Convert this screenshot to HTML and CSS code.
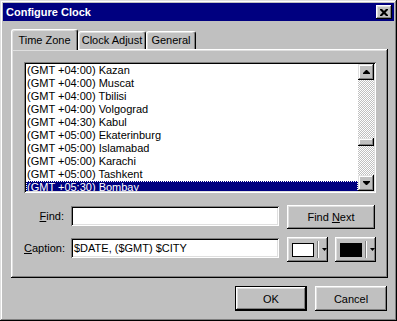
FILE: index.html
```html
<!DOCTYPE html>
<html>

<head>
    <meta charset="UTF-8">
    <title>Configure Clock</title>
    <link rel="stylesheet" href="styles.css">
</head>

<body>
    <div class="window">
        <div class="titlebar">
            <span class="title">Configure Clock</span>
            <div class="close">
                <svg width="8" height="7" viewBox="0 0 8 7">
                    <path d="M0 0h2l2 2 2-2h2v1L5.5 3.5 8 6v1H6L4 5 2 7H0V6l2.5-2.5L0 1z" fill="#000"/>
                </svg>
            </div>
        </div>
        <div class="content">
            <div class="tabs">
                <div class="tab active">Time Zone</div>
                <div class="tab tab-adjust">Clock Adjust</div>
                <div class="tab tab-general">General</div>
            </div>
            <div class="panel">
                <div class="listbox">
                    <ul class="items">
                        <li>(GMT +04:00) Kazan</li>
                        <li>(GMT +04:00) Muscat</li>
                        <li>(GMT +04:00) Tbilisi</li>
                        <li>(GMT +04:00) Volgograd</li>
                        <li>(GMT +04:30) Kabul</li>
                        <li>(GMT +05:00) Ekaterinburg</li>
                        <li>(GMT +05:00) Islamabad</li>
                        <li>(GMT +05:00) Karachi</li>
                        <li>(GMT +05:00) Tashkent</li>
                        <li class="selected">(GMT +05:30) Bombay</li>
                    </ul>
                    <div class="scrollbar">
                        <div class="scroll-btn">
                            <svg width="7" height="4" viewBox="0 0 7 4"><path d="M3 0h1l3 3v1H0V3z" fill="#000"/></svg>
                        </div>
                        <div class="track">
                            <div class="thumb"></div>
                        </div>
                        <div class="scroll-btn">
                            <svg width="7" height="4" viewBox="0 0 7 4"><path d="M0 0h7v1L4 4H3L0 1z" fill="#000"/></svg>
                        </div>
                    </div>
                </div>

                <div class="row find-row">
                    <span class="label"><u>F</u>ind:</span>
                    <div class="field"></div>
                    <div class="btn find-next"><span>Find <u>N</u>ext</span></div>
                </div>

                <div class="row caption-row">
                    <span class="label"><u>C</u>aption:</span>
                    <div class="field">$DATE, ($GMT) $CITY</div>
                    <div class="color-btn">
                        <span class="swatch"></span>
                        <span class="sep"></span>
                        <svg width="5" height="3" viewBox="0 0 5 3"><path d="M0 0h5L2.5 3z" fill="#000"/></svg>
                    </div>
                    <div class="color-btn color-btn-2">
                        <span class="swatch black"></span>
                        <span class="sep"></span>
                        <svg width="5" height="3" viewBox="0 0 5 3"><path d="M0 0h5L2.5 3z" fill="#000"/></svg>
                    </div>
                </div>
            </div>

            <div class="buttons">
                <div class="btn default">OK</div>
                <div class="btn">Cancel</div>
            </div>
        </div>
    </div>
</body>

</html>
```

FILE: styles.css
```css
* {
    font-family: "Liberation Sans", Arial, sans-serif;
    font-size: 11px;
    box-sizing: border-box;
}

body {
    margin: 0;
    background-color: #c0c0c0;
}

.window {
    width: 397px;
    height: 321px;
    padding: 3px;
    background-color: #c0c0c0;
    box-shadow: inset -1px -1px #000, inset 1px 1px #dfdfdf,
        inset -2px -2px #808080, inset 2px 2px #fff;
}

.titlebar {
    display: flex;
    align-items: center;
    justify-content: space-between;
    height: 18px;
    padding: 0 2px 0 3px;
    background-color: #000080;
}

.title {
    color: #fff;
    font-weight: bold;
}

.close {
    display: flex;
    align-items: center;
    justify-content: center;
    width: 16px;
    height: 14px;
    background-color: #c0c0c0;
    box-shadow: inset -1px -1px #000, inset 1px 1px #fff,
        inset -2px -2px #808080, inset 2px 2px #dfdfdf;
}

.content {
    padding: 8px 6px 0 8px;
}

/* tabs */

.tabs {
    display: flex;
    align-items: flex-end;
    margin-bottom: -1px;
}

.tab {
    height: 19px;
    padding-top: 2px;
    line-height: 13px;
    text-align: center;
    border-top: 1px solid #fff;
    border-left: 1px solid #fff;
    border-right: 1px solid #000;
    border-radius: 3px 3px 0 0;
    box-shadow: inset -1px 0 #808080, inset 1px 1px #dfdfdf;
}

.tab.active {
    position: relative;
    z-index: 1;
    width: 67px;
    height: 21px;
    padding-top: 4px;
    background-color: #c0c0c0;
}

.tab-adjust {
    width: 68px;
}

.tab-general {
    width: 50px;
}

.panel {
    position: relative;
    height: 229px;
    padding: 13px 12px 0 13px;
    background-color: #c0c0c0;
    box-shadow: inset -1px -1px #000, inset 1px 1px #fff,
        inset -2px -2px #808080, inset 2px 2px #dfdfdf;
}

/* list */

.listbox {
    display: flex;
    height: 131px;
    padding: 2px;
    background-color: #fff;
    box-shadow: inset 1px 1px #808080, inset -1px -1px #fff,
        inset 2px 2px #000, inset -2px -2px #dfdfdf;
}

.items {
    flex: 1;
    margin: 0;
    padding: 0;
    list-style: none;
    overflow: hidden;
}

.items li {
    height: 13px;
    padding-left: 1px;
    line-height: 13px;
    white-space: nowrap;
}

.items li.selected {
    background-color: #000080;
    color: #fff;
    outline: 1px dotted #fff;
    outline-offset: -1px;
}

.scrollbar {
    display: flex;
    flex-direction: column;
    width: 16px;
}

.scroll-btn,
.thumb {
    background-color: #c0c0c0;
    box-shadow: inset -1px -1px #000, inset 1px 1px #dfdfdf,
        inset -2px -2px #808080, inset 2px 2px #fff;
}

.scroll-btn {
    display: flex;
    align-items: center;
    justify-content: center;
    height: 16px;
}

.track {
    flex: 1;
    padding-top: 58px;
    background: repeating-conic-gradient(#c0c0c0 0 25%, #fff 0 50%) 0 0 / 2px 2px;
}

.thumb {
    height: 8px;
}

/* fields */

.row {
    display: flex;
    align-items: flex-start;
}

.find-row {
    height: 24px;
    margin-top: 12px;
}

.caption-row {
    height: 25px;
    margin-top: 8px;
}

.label {
    width: 40px;
    margin-top: 5px;
    margin-right: 7px;
    text-align: right;
    white-space: nowrap;
}

.field {
    width: 208px;
    height: 20px;
    margin-top: 1px;
    padding: 0 3px;
    line-height: 20px;
    background-color: #fff;
    box-shadow: inset 1px 1px #808080, inset -1px -1px #fff,
        inset 2px 2px #000, inset -2px -2px #dfdfdf;
}

.btn,
.color-btn {
    background-color: #c0c0c0;
    box-shadow: inset -1px -1px #000, inset 1px 1px #fff,
        inset -2px -2px #808080, inset 2px 2px #dfdfdf;
}

.btn {
    display: flex;
    align-items: center;
    justify-content: center;
    width: 72px;
    height: 25px;
}

.find-next {
    width: 88px;
    height: 24px;
    margin-left: 8px;
}

.color-btn {
    display: flex;
    align-items: center;
    width: 41px;
    height: 25px;
    margin-left: 8px;
    padding-left: 5px;
}

.color-btn-2 {
    margin-left: 7px;
}

.swatch {
    width: 22px;
    height: 14px;
    border: 1px solid #000;
    background-color: #fff;
}

.swatch.black {
    background-color: #000;
}

.sep {
    width: 2px;
    height: 17px;
    margin: 0 3px;
    border-left: 1px solid #808080;
    border-right: 1px solid #fff;
}

/* bottom buttons */

.buttons {
    display: flex;
    justify-content: flex-end;
    gap: 8px;
    margin-top: 8px;
    padding-right: 1px;
}

.btn.default {
    box-shadow: inset -1px -1px #000, inset 1px 1px #000,
        inset -2px -2px #000, inset 2px 2px #fff,
        inset -3px -3px #808080, inset 3px 3px #dfdfdf;
}
```
